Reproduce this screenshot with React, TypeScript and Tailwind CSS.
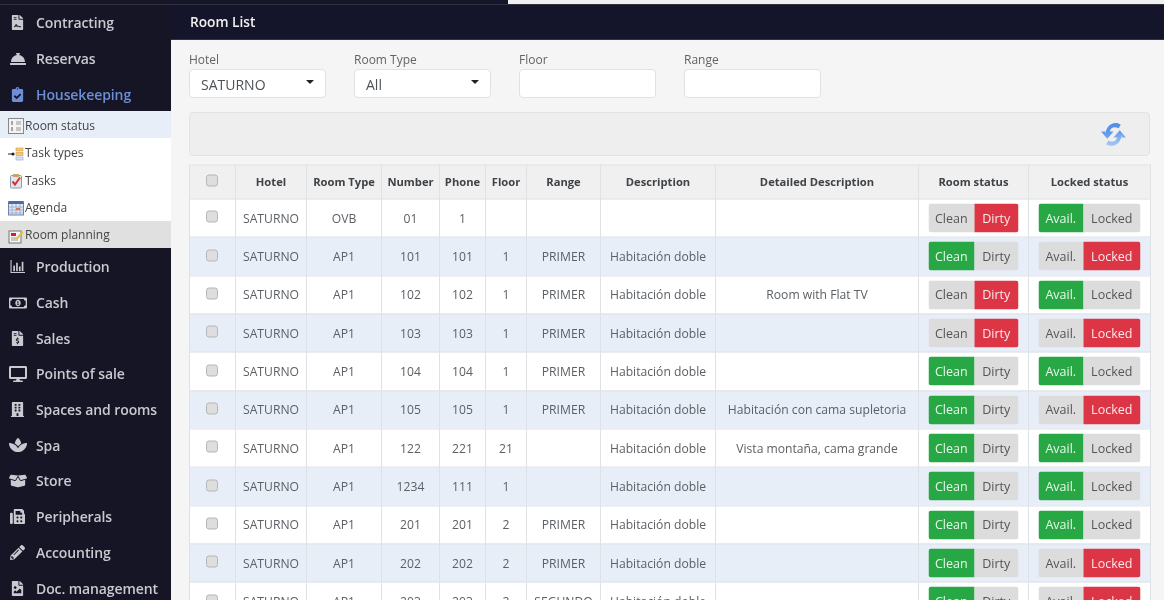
import React from "react";
import { FaFileContract, FaConciergeBell, FaClipboardCheck, FaRegMoneyBillAlt, FaFileInvoiceDollar, FaDesktop, FaBuilding, FaSpa, FaBoxOpen, FaFax, FaPencilAlt, FaFileImage } from "react-icons/fa";

const F = "font-['Open_Sans','Noto_Sans',sans-serif]";

function BarsIcon({ className }: { className?: string }) {
  return (
    <svg className={className} viewBox="0 0 16 16" fill="currentColor">
      <path d="M0.500 1h1.200v12.800H16V15H0.500z" />
      <rect x="3.500" y="7" width="1.800" height="6" />
      <rect x="6.500" y="4" width="1.800" height="9" />
      <rect x="9.500" y="8" width="1.800" height="5" />
      <rect x="12.500" y="3" width="1.800" height="10" />
    </svg>
  );
}

function MainItem({ icon: I, label, active, big }: { icon: any; label: string; active?: boolean; big?: boolean }) {
  return (
    <div className={`h-[35.7px] flex items-center pl-[8px] text-[14px] font-semibold ${active ? "text-[#6d8fd6]" : "text-[#c9c9cf]"}`}>
      <span className="w-[28px] flex justify-center pr-[9px]"><I className={big ? "w-[18px] h-[16px]" : "w-[15px] h-[15px]"} /></span>
      <span className="tracking-[-0.1px]">{label}</span>
    </div>
  );
}

function SubIcon({ kind }: { kind: number }) {
  if (kind === 0)
    return (
      <svg width="16" height="16" viewBox="0 0 16 16"><rect x="0.500" y="0.500" width="15" height="15" fill="#f3f3f3" stroke="#888" /><path d="M3 4h2M3 6h2M3 10h2M3 12h2" stroke="#557" /><path d="M8 4h5M8 6h5M8 10h5M8 12h5" stroke="#999" /></svg>
    );
  if (kind === 1)
    return (
      <svg width="16" height="16" viewBox="0 0 16 16"><path d="M0 8h6" stroke="#222" /><circle cx="5" cy="8" r="1.600" fill="#222" /><rect x="8" y="2" width="7" height="3" fill="#f2c879" stroke="#d49b3c" strokeWidth=".6" /><rect x="8" y="6.500" width="7" height="3" fill="#f2c879" stroke="#d49b3c" strokeWidth=".6" /><rect x="8" y="11" width="7" height="3" fill="#dce6f5" stroke="#8aa5cf" strokeWidth=".6" /></svg>
    );
  if (kind === 2)
    return (
      <svg width="16" height="16" viewBox="0 0 16 16"><rect x="2.500" y="2.500" width="11" height="12.500" rx="1" fill="#dfe6f0" stroke="#8a99ad" /><rect x="5" y="1" width="6" height="3" fill="#c9a26e" /><path d="M4.500 8.500l2.500 3 5-7" stroke="#d8342c" strokeWidth="2" fill="none" /></svg>
    );
  if (kind === 3)
    return (
      <svg width="16" height="16" viewBox="0 0 16 16"><rect x="0.500" y="2" width="15" height="13" fill="#dfe7f3" stroke="#6d83a8" /><rect x="0.500" y="1" width="15" height="3" fill="#4a6da6" /><path d="M1 7h14M1 10h14M1 13h14M4 4v11M8 4v11M12 4v11" stroke="#8ea3c4" strokeWidth=".7" /><rect x="8" y="8" width="4" height="2" fill="#e0704e" /></svg>
    );
  return (
    <svg width="16" height="16" viewBox="0 0 16 16"><rect x="1" y="3" width="12" height="12" fill="#f5f5f5" stroke="#777" /><rect x="3" y="5" width="5" height="3" fill="#c23" /><path d="M3 10h7M3 12h7" stroke="#999" /><path d="M8 10l6-7 1.500 1.500-6 7z" fill="#e8c12e" /></svg>
  );
}

function SubItem({ kind, label, cls }: { kind: number; label: string; cls: string }) {
  return (
    <div className={`h-[27.4px] flex items-center pl-[8px] pt-[3px] gap-[1px] text-[12px] text-[#444] ${cls}`}>
      <SubIcon kind={kind} />
      <span className="-mt-[1px]">{label}</span>
    </div>
  );
}

function SyncIcon() {
  return (
    <svg width="25" height="27" viewBox="0 0 24 26">
      <defs>
        <linearGradient id="syncA" x1="0" y1="0" x2="0" y2="1">
          <stop offset="0" stopColor="#4f8be6" />
          <stop offset="1" stopColor="#6aa2ee" />
        </linearGradient>
        <linearGradient id="syncB" x1="0" y1="0" x2="0" y2="1">
          <stop offset="0" stopColor="#5c97ea" />
          <stop offset="1" stopColor="#a9c9f4" />
        </linearGradient>
      </defs>
      <path d="M4 15C4 6 12 0 19 4.500L17 8C12 5.500 9 8 8.500 11L12 11L6 18L0 11L4 11Z" fill="url(#syncA)" transform="translate(0 -1)" />
      <path d="M20 11C20 20 12 26 5 21.500L7 18C12 20.500 15 18 15.500 15L12 15L18 8L24 15L20 15Z" fill="url(#syncB)" transform="translate(0 1)" />
    </svg>
  );
}

function Field({ label, value }: { label: string; value?: string }) {
  return (
    <div className="w-[137px]">
      <div className="text-[12px] leading-[16px] h-[17px] text-[#5f6468]">{label}</div>
      <div className="h-[29px] bg-white border border-[#dfe2e5] rounded-[4px] relative flex items-center pl-[11px] pt-[1px] text-[14px] text-[#4d5257]">
        {value}
        {value && <span className="absolute right-[11px] top-[10px] w-0 h-0 border-x-[4.500px] border-x-transparent border-t-[4.500px] border-t-[#222]" />}
      </div>
    </div>
  );
}

function Toggle({ left, right, on, width, split }: { left: string; right: string; on: "l" | "r"; width: string; split: string }) {
  const g = "bg-[#28a745] text-[#e8f8ec]";
  const r = "bg-[#dc3545] text-[#fde8ea]";
  const n = "bg-[#dcdcdc] text-[#555]";
  const red = on === "r";
  return (
    <div className={`flex h-[29px] -translate-x-[0.5px] mx-auto rounded-[3px] overflow-hidden text-[12.5px] ${width}`}>
      <div className={`flex items-center justify-center pt-[1px] ${split} ${red ? n : g}`}>{left}</div>
      <div className={`flex items-center justify-center pt-[1px] flex-1 ${red ? r : n}`}>{right}</div>
    </div>
  );
}

const Check = () => <span className="inline-block align-middle -translate-x-[1px] -translate-y-[2px] w-[12px] h-[12px] rounded-[3px] bg-[#dedede] border border-[#b5b5b5]" />;

type Row = [string, string, string, string, string, string, string, "l" | "r", "l" | "r"];
const H = "Habitación doble";
const rows: Row[] = [
  ["OVB", "01", "1", "", "", "", "", "r", "l"],
  ["AP1", "101", "101", "1", "PRIMER", H, "", "l", "r"],
  ["AP1", "102", "102", "1", "PRIMER", H, "Room with Flat TV", "r", "l"],
  ["AP1", "103", "103", "1", "PRIMER", H, "", "r", "r"],
  ["AP1", "104", "104", "1", "PRIMER", H, "", "l", "l"],
  ["AP1", "105", "105", "1", "PRIMER", H, "Habitación con cama supletoria", "l", "r"],
  ["AP1", "122", "221", "21", "", H, "Vista montaña, cama grande", "l", "l"],
  ["AP1", "1234", "111", "1", "", H, "", "l", "l"],
  ["AP1", "201", "201", "2", "PRIMER", H, "", "l", "l"],
  ["AP1", "202", "202", "2", "PRIMER", H, "", "l", "r"],
  ["AP1", "203", "203", "2", "SEGUNDO", H, "", "l", "r"],
];

const widths = [46, 71, 75, 58, 46, 41, 74, 115, 203, 110, 122];
const headers = ["", "Hotel", "Room Type", "Number", "Phone", "Floor", "Range", "Description", "Detailed Description", "Room status", "Locked status"];

export default function App() {
  return (
    <div className={`w-[1164px] h-[600px] overflow-hidden flex flex-col bg-[#f5f5f5] blur-[0.4px] ${F}`}>
      <div className="h-[4px] flex shrink-0">
        <div className="w-[508px] bg-[#15152a]" />
        <div className="flex-1 bg-[#f0f0f0]" />
      </div>
      <div className="flex flex-1 min-h-0">
        <aside className="w-[171px] shrink-0 bg-[#151526] border-t border-[#33333f] overflow-hidden">
          <MainItem icon={FaFileContract} label="Contracting" />
          <MainItem icon={FaConciergeBell} label="Reservas" big />
          <MainItem icon={FaClipboardCheck} label="Housekeeping" active />
          <div className="-mt-[1px]">
            <SubItem kind={0} label="Room status" cls="bg-[#e8eef8]" />
            <SubItem kind={1} label="Task types" cls="bg-white" />
            <SubItem kind={2} label="Tasks" cls="bg-white" />
            <SubItem kind={3} label="Agenda" cls="bg-white" />
            <SubItem kind={4} label="Room planning" cls="bg-[#e0e0e0]" />
          </div>
          <div className="h-[1px]" />
          <MainItem icon={BarsIcon} label="Production" />
          <MainItem icon={FaRegMoneyBillAlt} label="Cash" big />
          <MainItem icon={FaFileInvoiceDollar} label="Sales" />
          <MainItem icon={FaDesktop} label="Points of sale" big />
          <MainItem icon={FaBuilding} label="Spaces and rooms" />
          <MainItem icon={FaSpa} label="Spa" big />
          <MainItem icon={FaBoxOpen} label="Store" big />
          <MainItem icon={FaFax} label="Peripherals" />
          <MainItem icon={FaPencilAlt} label="Accounting" />
          <MainItem icon={FaFileImage} label="Doc. management" />
        </aside>
        <main className="flex-1 min-w-0 flex flex-col">
          <div className="h-[36px] shrink-0 bg-[#14142a] border-y border-[#33333f] flex items-center pl-[19px] text-[13.7px] font-semibold text-[#f0f0f0]">Room List</div>
          <div className="pl-[18px] pr-[14px] pt-[12px]">
            <div className="flex gap-[28px]">
              <Field label="Hotel" value="SATURNO" />
              <Field label="Room Type" value="All" />
              <Field label="Floor" />
              <Field label="Range" />
            </div>
            <div className="mt-[14px] h-[44px] bg-[#eeeeee] border border-[#e3e3e3] rounded-[4px] flex items-center justify-end pr-[23px]">
              <SyncIcon />
            </div>
            <table className="mt-[9px] -translate-y-[0.5px] table-fixed border-collapse w-[961px] text-[12.15px] text-[#5c6065]">
              <colgroup>
                {widths.map((w, i) => (
                  <col key={i} style={{ width: w }} />
                ))}
              </colgroup>
              <thead>
                <tr className="h-[34px] bg-[#f0f0f0]">
                  {headers.map((h, i) => (
                    <th key={i} className="border border-[#dee2e6] text-center font-bold text-[11.2px] text-[#3f4347] p-0 whitespace-nowrap">
                      {i === 0 ? <Check /> : h}
                    </th>
                  ))}
                </tr>
              </thead>
              <tbody>
                {rows.map((r, i) => (
                  <tr key={i} className={`h-[38.33px] ${i % 2 ? "bg-[#e8eef8]" : "bg-white"}`}>
                    <td className="border border-[#dee2e6] text-center p-0"><Check /></td>
                    <td className="border border-[#dee2e6] text-center p-0">SATURNO</td>
                    {[r[0], r[1], r[2], r[3], r[4], r[5], r[6]].map((c, j) => (
                      <td key={j} className="border border-[#dee2e6] text-center p-0 whitespace-nowrap">{c}</td>
                    ))}
                    <td className="border border-[#dee2e6] p-0">
                      <Toggle left="Clean" right="Dirty" on={r[7]} width="w-[90px]" split="w-[46.5px]" />
                    </td>
                    <td className="border border-[#dee2e6] p-0">
                      <Toggle left="Avail." right="Locked" on={r[8]} width="w-[102px]" split="w-[45.5px]" />
                    </td>
                  </tr>
                ))}
              </tbody>
            </table>
          </div>
        </main>
      </div>
    </div>
  );
}
